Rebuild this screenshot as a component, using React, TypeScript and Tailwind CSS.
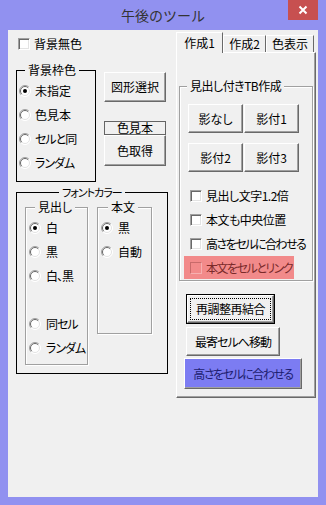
import React from "react";

const Radio = ({ checked }: { checked?: boolean }) => (
  <svg width="12" height="12" viewBox="0 0 12 12" className="shrink-0">
    <circle cx="6" cy="6" r="5.5" fill="#fff" />
    <path d="M2.1 9.9 A5.5 5.5 0 0 1 9.9 2.1" stroke="#a0a0a0" strokeWidth="1" fill="none" />
    <path d="M9.9 2.1 A5.5 5.5 0 0 1 2.1 9.9" stroke="#ffffff" strokeWidth="1" fill="none" />
    <path d="M2.8 9.2 A4.5 4.5 0 0 1 9.2 2.8" stroke="#696969" strokeWidth="1" fill="none" />
    <path d="M9.2 2.8 A4.5 4.5 0 0 1 2.8 9.2" stroke="#e3e3e3" strokeWidth="1" fill="none" />
    {checked && <circle cx="6" cy="6" r="2" fill="#000" />}
  </svg>
);

const Check = ({ red }: { red?: boolean }) =>
  red ? (
    <div className="w-[12px] h-[12px] shrink-0 border border-t-[#c86a6a] border-l-[#c86a6a] border-b-[#f6b0b0] border-r-[#f6b0b0] bg-[#f28a8a]" />
  ) : (
    <div className="w-[12px] h-[12px] shrink-0 border border-t-[#a0a0a0] border-l-[#a0a0a0] border-b-white border-r-white bg-white shadow-[inset_1px_1px_0_#696969,inset_-1px_-1px_0_#e3e3e3]" />
  );

const Btn = ({ children, className }: { children: React.ReactNode; className: string }) => (
  <div
    className={
      "flex items-center justify-center whitespace-nowrap border border-t-white border-l-white border-b-[#696969] border-r-[#696969] shadow-[inset_-1px_-1px_0_#a0a0a0] " +
      className
    }
  >
    {children}
  </div>
);

const RRow = ({ checked, label, gap, tight }: { checked?: boolean; label: string; gap: string; tight?: boolean }) => (
  <div className={"flex items-center h-[14px] " + gap}>
    <Radio checked={checked} />
    <span className={"whitespace-nowrap " + (tight ? "tracking-[-1px]" : "")}>{label}</span>
  </div>
);

export default function App() {
  return (
    <div className="w-[326px] h-[505px] bg-[#9191F0] flex flex-col font-['Noto_Sans_CJK_JP',sans-serif] [font-feature-settings:'palt'] text-black text-[12px] leading-[14px]">
      <div className="relative h-[30px] flex items-center justify-center">
        <span className="text-[14px] leading-[18px] text-[#333] [font-feature-settings:normal]">午後のツール</span>
        <div className="absolute right-[8px] top-0 w-[30px] h-[20px] bg-[#C75050] flex items-center justify-center">
          <svg width="10" height="10" viewBox="0 0 10 10">
            <path d="M1.5 1.5 L8.5 8.5 M8.5 1.5 L1.5 8.5" stroke="#fff" strokeWidth="2" />
          </svg>
        </div>
      </div>

      <div className="mx-[8px] h-[467px] bg-[#F0F0F0] flex">
        {/* left column */}
        <div className="w-[168px] flex flex-col">
          <div className="mt-[8px] ml-[10px] h-[12px] flex items-center gap-[4px]">
            <Check />
            <span>背景無色</span>
          </div>

          <div className="mt-[20px] ml-[8px] flex">
            <div className="relative w-[80px] h-[112px] border border-black">
              <span className="absolute left-[8px] top-[-8px] px-[3px] bg-[#F0F0F0]">背景枠色</span>
              <div className="pt-[13px] pl-[2px] flex flex-col gap-[10px]">
                <RRow checked label="未指定" gap="gap-[4px]" />
                <RRow label="色見本" gap="gap-[4px]" />
                <RRow label="セルと同" gap="gap-[4px]" tight />
                <RRow label="ランダム" gap="gap-[4px]" tight />
              </div>
            </div>
            <div className="ml-[8px] w-[62px] flex flex-col">
              <Btn className="mt-[2px] h-[30px]">図形選択</Btn>
              <div className="mt-[19px] h-[14px] border border-[#646464] flex items-center justify-center leading-[12px]">
                色見本
              </div>
              <Btn className="h-[31px]">色取得</Btn>
            </div>
          </div>

          <div className="relative mt-[10px] ml-[8px] w-[152px] h-[182px] border border-black flex items-start pt-[14px] pl-[8px]">
            <span className="absolute left-[42px] top-[-8px] px-[3px] bg-[#F0F0F0] text-[11px] tracking-[-1px] whitespace-nowrap">フォントカラー</span>
            <div className="relative w-[63px] h-[158px] border border-[#a0a0a0] shadow-[inset_1px_1px_0_#fff,1px_1px_0_#fff]">
              <span className="absolute left-[9px] top-[-8px] px-[3px] bg-[#F0F0F0] whitespace-nowrap">見出し</span>
              <div className="pt-[13px] pl-[3px] flex flex-col gap-[10px]">
                <RRow checked label="白" gap="gap-[5px]" />
                <RRow label="黒" gap="gap-[5px]" />
                <RRow label="白、黒" gap="gap-[5px]" tight />
                <div className="h-[14px]" />
                <RRow label="同セル" gap="gap-[5px]" tight />
                <RRow label="ランダム" gap="gap-[5px]" tight />
              </div>
            </div>
            <div className="relative ml-[9px] w-[55px] h-[127px] border border-[#a0a0a0] shadow-[inset_1px_1px_0_#fff,1px_1px_0_#fff]">
              <span className="absolute left-[10px] top-[-8px] px-[3px] bg-[#F0F0F0]">本文</span>
              <div className="pt-[13px] pl-[3px] flex flex-col gap-[10px]">
                <RRow checked label="黒" gap="gap-[5px]" />
                <RRow label="自動" gap="gap-[5px]" />
              </div>
            </div>
          </div>
        </div>

        {/* right column: tabs */}
        <div className="w-[140px] flex flex-col">
          <div className="mt-[2px] h-[20px] flex items-end">
            <div className="relative z-10 mb-[-1px] w-[47px] h-[21px] bg-[#F0F0F0] border-t border-l border-white border-r border-r-[#696969] flex items-center justify-center">
              作成1
            </div>
            <div className="w-[43px] h-[17px] border-t border-l border-white border-r border-r-[#696969] flex items-center justify-center">
              作成2
            </div>
            <div className="w-[48px] h-[17px] border-t border-l border-white border-r border-r-[#696969] flex items-center justify-center">
              色表示
            </div>
          </div>
          <div className="h-[346px] border border-t-white border-l-white border-b-[#696969] border-r-[#696969] shadow-[inset_-1px_-1px_0_#a0a0a0] flex flex-col">
            <div className="relative ml-[2px] mt-[33px] w-[134px] h-[195px] border border-[#a0a0a0] shadow-[inset_1px_1px_0_#fff,1px_1px_0_#fff] flex flex-col">
              <span className="absolute left-[7px] top-[-8px] px-[3px] bg-[#F0F0F0] whitespace-nowrap tracking-[-0.5px]">見出し付きTB作成</span>
              <div className="ml-[8px] mt-[17px] flex gap-[1px]">
                <Btn className="w-[55px] h-[29px]">影なし</Btn>
                <Btn className="w-[55px] h-[29px]">影付1</Btn>
              </div>
              <div className="ml-[8px] mt-[10px] flex gap-[1px]">
                <Btn className="w-[55px] h-[29px]">影付2</Btn>
                <Btn className="w-[55px] h-[29px]">影付3</Btn>
              </div>
              <div className="ml-[4px] mt-[12px] flex flex-col gap-[1px]">
                <div className="w-[110px] h-[23px] pl-[6px] flex items-center gap-[4px]">
                  <Check />
                  <span className="whitespace-nowrap tracking-[-0.5px]">見出し文字1.2倍</span>
                </div>
                <div className="w-[110px] h-[23px] pl-[6px] flex items-center gap-[4px]">
                  <Check />
                  <span className="whitespace-nowrap tracking-[-0.5px]">本文も中央位置</span>
                </div>
                <div className="w-[110px] h-[23px] pl-[6px] flex items-center gap-[4px]">
                  <Check />
                  <span className="whitespace-nowrap tracking-[-1.5px]">高さをセルに合わせる</span>
                </div>
                <div className="w-[110px] h-[23px] pl-[6px] flex items-center gap-[4px] bg-[#F28A8A] text-[#7a2a2a]">
                  <Check red />
                  <span className="whitespace-nowrap tracking-[-1.5px]">本文をセルとリンク</span>
                </div>
              </div>
            </div>

            <div className="ml-[9px] mt-[13px] w-[89px] h-[30px] border border-black">
              <div className="w-full h-full border border-t-white border-l-white border-b-[#696969] border-r-[#696969] shadow-[inset_-1px_-1px_0_#a0a0a0] p-[2px]">
                <div className="w-full h-full border border-dotted border-black flex items-center justify-center whitespace-nowrap tracking-[-0.5px]">
                  再調整再結合
                </div>
              </div>
            </div>
            <Btn className="ml-[9px] mt-[3px] w-[94px] h-[29px] tracking-[-1px]">最寄セルへ移動</Btn>
            <Btn className="ml-[7px] mt-[2px] w-[118px] h-[31px] bg-[#7C7CF2] text-[#1e1e70] border-t-[#a8a8f8] border-l-[#a8a8f8] tracking-[-1.5px]">
              高さをセルに合わせる
            </Btn>
          </div>
        </div>
      </div>
    </div>
  );
}
